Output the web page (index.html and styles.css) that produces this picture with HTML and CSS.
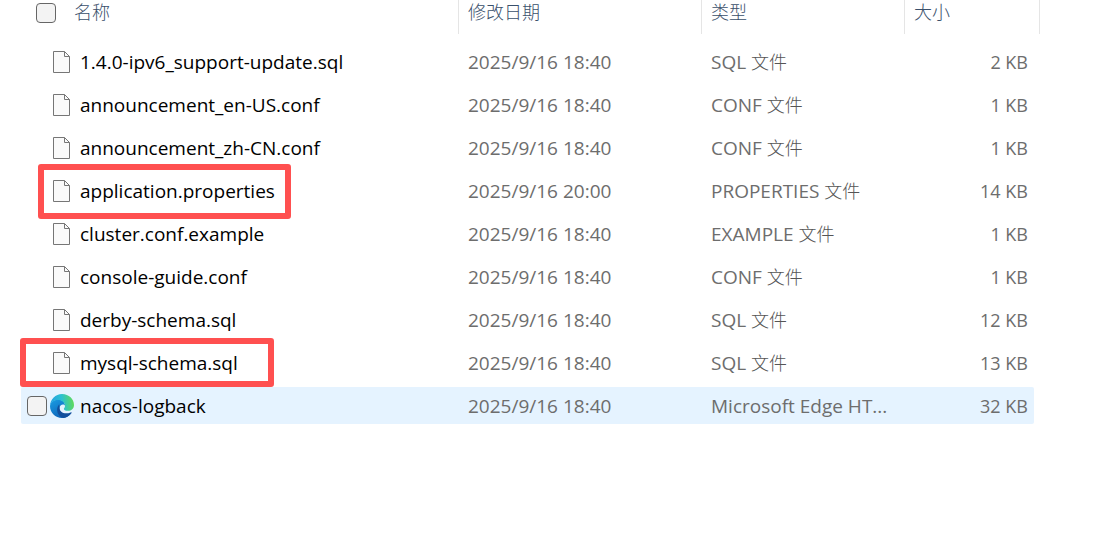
FILE: index.html
```
<!DOCTYPE html>
<html lang="zh-CN">
<head>
    <meta charset="UTF-8">
    <meta name="viewport" content="width=device-width, initial-scale=1.0">
    <title>conf</title>
    <link rel="stylesheet" href="styles.css">
</head>
<body>
    <!-- Shared page icon for plain files -->
    <svg class="symbols" width="0" height="0">
        <symbol id="file" viewBox="0 0 17 22">
            <path d="M.5.5H11.5L16.5 5.5V21.5H.5Z" fill="#fafafa" stroke="#767676"/>
            <path d="M11.5.5V5.5H16.5" fill="none" stroke="#767676"/>
        </symbol>
    </svg>

    <main class="explorer">
        <table class="files">
            <colgroup>
                <col class="col-name">
                <col class="col-date">
                <col class="col-type">
                <col class="col-size">
            </colgroup>
            <thead>
                <tr>
                    <th><div class="heading heading-name"><input type="checkbox" class="check" id="all"><label for="all">名称</label></div></th>
                    <th><div class="heading">修改日期</div></th>
                    <th><div class="heading">类型</div></th>
                    <th><div class="heading heading-size">大小</div></th>
                </tr>
            </thead>
            <tbody>
                <tr>
                    <td><div class="name"><svg class="icon"><use href="#file"/></svg><span>1.4.0-ipv6_support-update.sql</span></div></td>
                    <td>2025/9/16 18:40</td>
                    <td>SQL <span class="han">文件</span></td>
                    <td class="size">2 KB</td>
                </tr>
                <tr>
                    <td><div class="name"><svg class="icon"><use href="#file"/></svg><span>announcement_en-US.conf</span></div></td>
                    <td>2025/9/16 18:40</td>
                    <td>CONF <span class="han">文件</span></td>
                    <td class="size">1 KB</td>
                </tr>
                <tr>
                    <td><div class="name"><svg class="icon"><use href="#file"/></svg><span>announcement_zh-CN.conf</span></div></td>
                    <td>2025/9/16 18:40</td>
                    <td>CONF <span class="han">文件</span></td>
                    <td class="size">1 KB</td>
                </tr>
                <tr>
                    <td><div class="name"><svg class="icon"><use href="#file"/></svg><span>application.properties</span><i class="mark mark-application"></i></div></td>
                    <td>2025/9/16 20:00</td>
                    <td>PROPERTIES <span class="han">文件</span></td>
                    <td class="size">14 KB</td>
                </tr>
                <tr>
                    <td><div class="name"><svg class="icon"><use href="#file"/></svg><span>cluster.conf.example</span></div></td>
                    <td>2025/9/16 18:40</td>
                    <td>EXAMPLE <span class="han">文件</span></td>
                    <td class="size">1 KB</td>
                </tr>
                <tr>
                    <td><div class="name"><svg class="icon"><use href="#file"/></svg><span>console-guide.conf</span></div></td>
                    <td>2025/9/16 18:40</td>
                    <td>CONF <span class="han">文件</span></td>
                    <td class="size">1 KB</td>
                </tr>
                <tr>
                    <td><div class="name"><svg class="icon"><use href="#file"/></svg><span>derby-schema.sql</span></div></td>
                    <td>2025/9/16 18:40</td>
                    <td>SQL <span class="han">文件</span></td>
                    <td class="size">12 KB</td>
                </tr>
                <tr>
                    <td><div class="name"><svg class="icon"><use href="#file"/></svg><span>mysql-schema.sql</span><i class="mark mark-mysql"></i></div></td>
                    <td>2025/9/16 18:40</td>
                    <td>SQL <span class="han">文件</span></td>
                    <td class="size">13 KB</td>
                </tr>
                <tr class="hovered">
                    <td>
                        <div class="name name-checked">
                            <input type="checkbox" class="check" id="nacos">
                            <svg class="edge" viewBox="0 0 24 24">
                                <defs>
                                    <linearGradient id="top" x1="0" y1=".5" x2="1" y2=".4">
                                        <stop offset="0" stop-color="#259fe2"/>
                                        <stop offset=".5" stop-color="#2bc0d2"/>
                                        <stop offset="1" stop-color="#62dc55"/>
                                    </linearGradient>
                                    <linearGradient id="left" x1="0" y1="0" x2=".6" y2="1">
                                        <stop offset="0" stop-color="#1b9de2"/>
                                        <stop offset="1" stop-color="#0c62b8"/>
                                    </linearGradient>
                                </defs>
                                <path fill="url(#left)" d="M0 12C.5 8 4 5.600 8 5.600C12.500 5.600 15 8.500 15 11.500C14 9.500 9.500 10 9.500 14.500C9.500 19 14 22 20.500 20C18.500 22.500 15.500 24 12 24C5.300 24 0 18.700 0 12Z"/>
                                <path fill="#124f9c" d="M9.200 10.200C5 15 7.500 22.500 13.500 23.900C16.500 23.600 19 22.200 21 19.800C22 18.600 21.600 17.900 20.600 18.400C14.500 20.800 9.500 18 9.500 14Z"/>
                                <path fill="url(#top)" d="M0 12C.3 5.200 5.500 0 12 0C19 0 24 5.200 24 11C24 14.600 21.300 16.800 18 16.800C15.200 16.800 13.600 15.800 13.900 14.700C14 14.200 15 13.600 15 11.800C15 8.500 12 6 8 6C4 6 .8 8.200 0 12Z"/>
                            </svg>
                            <label for="nacos">nacos-logback</label>
                        </div>
                    </td>
                    <td>2025/9/16 18:40</td>
                    <td>Microsoft Edge HT...</td>
                    <td class="size">32 KB</td>
                </tr>
            </tbody>
        </table>
    </main>
</body>
</html>
```
FILE: styles.css
```
body {
    margin: 0;
    background-color: #fff;
    color: #6d6d6d;
    font-family: "Open Sans", "Noto Sans CJK SC", sans-serif;
    font-size: 19px;
    line-height: 24px;
}
.symbols {
    position: absolute;
}
.explorer {
    padding: 0 84px 0 21px;
}
.files {
    width: 100%;
    margin-top: -6px;
    table-layout: fixed;
    border-collapse: separate;
    border-spacing: 0 6px; /* gap between rows */
}
.col-date {
    width: 243px;
}
.col-type {
    width: 203px;
}
.col-size {
    width: 129px;
}
.files th {
    height: 37px;
    padding: 0;
    vertical-align: top;
    text-align: left;
    font-size: 18px;
    font-weight: 300;
    color: #3a506b;
}
.heading {
    display: flex;
    box-sizing: border-box;
    height: 34px;
    padding: 0 0 0 9px;
    border-right: 1px solid #e5e5e5;
}
.heading-name {
    gap: 18px;
    padding-left: 15px;
}
.heading-size {
    margin-right: -6px; /* last divider stands past the rows */
}
.files td {
    height: 37px;
    padding: 0 0 0 9px;
    white-space: nowrap;
}
.files td:first-child {
    padding: 0;
}
.han {
    font-size: 18px;
    font-weight: 300;
    color: #555;
}
.files .size {
    padding-right: 6px;
    text-align: right;
    font-size: 18px;
}
.name {
    display: flex;
    position: relative;
    align-items: center;
    gap: 10px;
    height: 37px;
    padding-left: 32px;
    color: #000;
}
.name-checked {
    gap: 6px;
    padding-left: 6px;
}
.name-checked .edge {
    margin-left: -3px;
}
.icon {
    width: 17px;
    height: 22px;
}
.edge {
    width: 24px;
    height: 24px;
}
.check {
    appearance: none;
    box-sizing: border-box;
    width: 20px;
    height: 20px;
    margin: 0;
    border: 1px solid #666;
    border-radius: 4px;
    background-color: #f3f3f3;
}
.heading .check {
    margin-top: 3px;
}
.hovered td {
    background-color: #e5f3ff;
}
.hovered td:first-child {
    border-radius: 2px 0 0 2px;
}
.hovered td:last-child {
    border-radius: 0 2px 2px 0;
}
/* Red frames round the files to edit */
.mark {
    position: absolute;
    box-sizing: border-box;
    border: 6px solid #ff5050;
    border-radius: 3px;
}
.mark-application {
    top: -8px;
    left: 17px;
    width: 253px;
    height: 55px;
}
.mark-mysql {
    top: -6px;
    left: -1px;
    width: 254px;
    height: 49px;
}
```
